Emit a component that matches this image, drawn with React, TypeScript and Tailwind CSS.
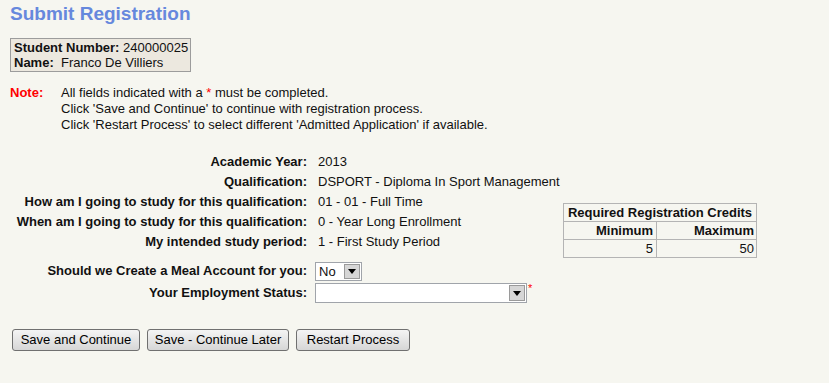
import React from 'react';

const rows = [
  { label: 'Academic Year:', value: '2013' },
  { label: 'Qualification:', value: 'DSPORT - Diploma In Sport Management' },
  { label: 'How am I going to study for this qualification:', value: '01 - 01 - Full Time' },
  { label: 'When am I going to study for this qualification:', value: '0 - Year Long Enrollment' },
  { label: 'My intended study period:', value: '1 - First Study Period' },
];

function DropButton() {
  return (
    <span className="absolute right-[1px] top-[1px] bottom-[1px] w-[16px] bg-[#d6d6d6] border border-[#9a9a9a] flex items-center justify-center">
      <svg width="8" height="5" viewBox="0 0 8 5">
        <path d="M0 0h8L4 5z" fill="#000" />
      </svg>
    </span>
  );
}

function FakeSelect({ value, width, height }: { value: string; width: string; height: string }) {
  return (
    <div className={`relative bg-white border border-[#a0a4aa] ${width} ${height} pl-[3px] leading-[17px]`}>
      {value}
      <DropButton />
    </div>
  );
}

export default function App() {
  return (
    <div className="w-[829px] h-[383px] overflow-hidden bg-[#f6f6f0] text-[13px] text-[#111] font-['Liberation_Sans',Arial,sans-serif] pl-[10px]">
      <h1 className="mt-[3px] text-[19px] leading-[22px] font-bold text-[#6688dd]">Submit Registration</h1>

      {/* Student details */}
      <div className="mt-[13px] w-fit whitespace-nowrap border border-[#9c9c9c] bg-[#ece8df] pl-[3px] pr-[2px] py-[1px] leading-[15px]">
        <div>
          <span className="font-bold">Student Number:</span> 240000025
        </div>
        <div>
          <span className="font-bold">Name:</span>&nbsp; Franco De Villiers
        </div>
      </div>

      {/* Note */}
      <div className="mt-[13px] flex leading-4">
        <div className="w-[51px] font-bold text-[#ff0000]">Note:</div>
        <div>
          <div>
            All fields indicated with a <span className="text-[#ff0000]">*</span> must be completed.
          </div>
          <div>Click 'Save and Continue' to continue with registration process.</div>
          <div>Click 'Restart Process' to select different 'Admitted Application' if available.</div>
        </div>
      </div>

      {/* Registration details */}
      <div className="mt-[19px] flex">
        <div className="w-[553px]">
          {rows.map((r) => (
            <div key={r.label} className="flex h-5 items-center">
              <div className="w-[297px] text-right font-bold">{r.label}</div>
              <div className="pl-[11px]">{r.value}</div>
            </div>
          ))}
          <div className="mt-[8px] flex h-[22px] items-center">
            <div className="w-[297px] text-right font-bold">Should we Create a Meal Account for you:</div>
            <div className="pl-[8px]">
              <FakeSelect value="No" width="w-[47px]" height="h-[19px]" />
            </div>
          </div>
          <div className="flex h-[22px] items-center">
            <div className="w-[297px] text-right font-bold">Your Employment Status:</div>
            <div className="pl-[8px] flex items-start">
              <FakeSelect value="" width="w-[212px]" height="h-[20px]" />
              <span className="text-[#ff0000] text-[11px] leading-[11px] ml-[1px]">*</span>
            </div>
          </div>
        </div>

        {/* Credits */}
        <table className="mt-[51px] h-fit border-collapse border border-[#b4b4b4] w-[194px]">
          <tbody>
            <tr className="h-[18px]">
              <th colSpan={2} className="border border-[#b4b4b4] px-[2px] font-bold text-center leading-[16px]">
                Required Registration Credits
              </th>
            </tr>
            <tr className="h-[18px]">
              <th className="border border-[#b4b4b4] w-[93px] px-[3px] font-bold text-right leading-[16px]">Minimum</th>
              <th className="border border-[#b4b4b4] px-[2px] font-bold text-right leading-[16px]">Maximum</th>
            </tr>
            <tr className="h-[18px]">
              <td className="border border-[#b4b4b4] px-[3px] text-right leading-[16px]">5</td>
              <td className="border border-[#b4b4b4] px-[2px] text-right leading-[16px]">50</td>
            </tr>
          </tbody>
        </table>
      </div>

      {/* Actions */}
      <div className="mt-[25px] ml-[2px] flex gap-[7px]">
        {['Save and Continue', 'Save - Continue Later', 'Restart Process'].map((b, i) => (
          <button
            key={b}
            className={`h-[22px] ${i === 0 ? 'w-[128px]' : i === 1 ? 'w-[142px]' : 'w-[114px]'} rounded-[3px] border border-[#707070] bg-gradient-to-b from-[#f4f4f4] to-[#d6d6d6] text-[13px] leading-[18px] text-black`}
          >
            {b}
          </button>
        ))}
      </div>
    </div>
  );
}
